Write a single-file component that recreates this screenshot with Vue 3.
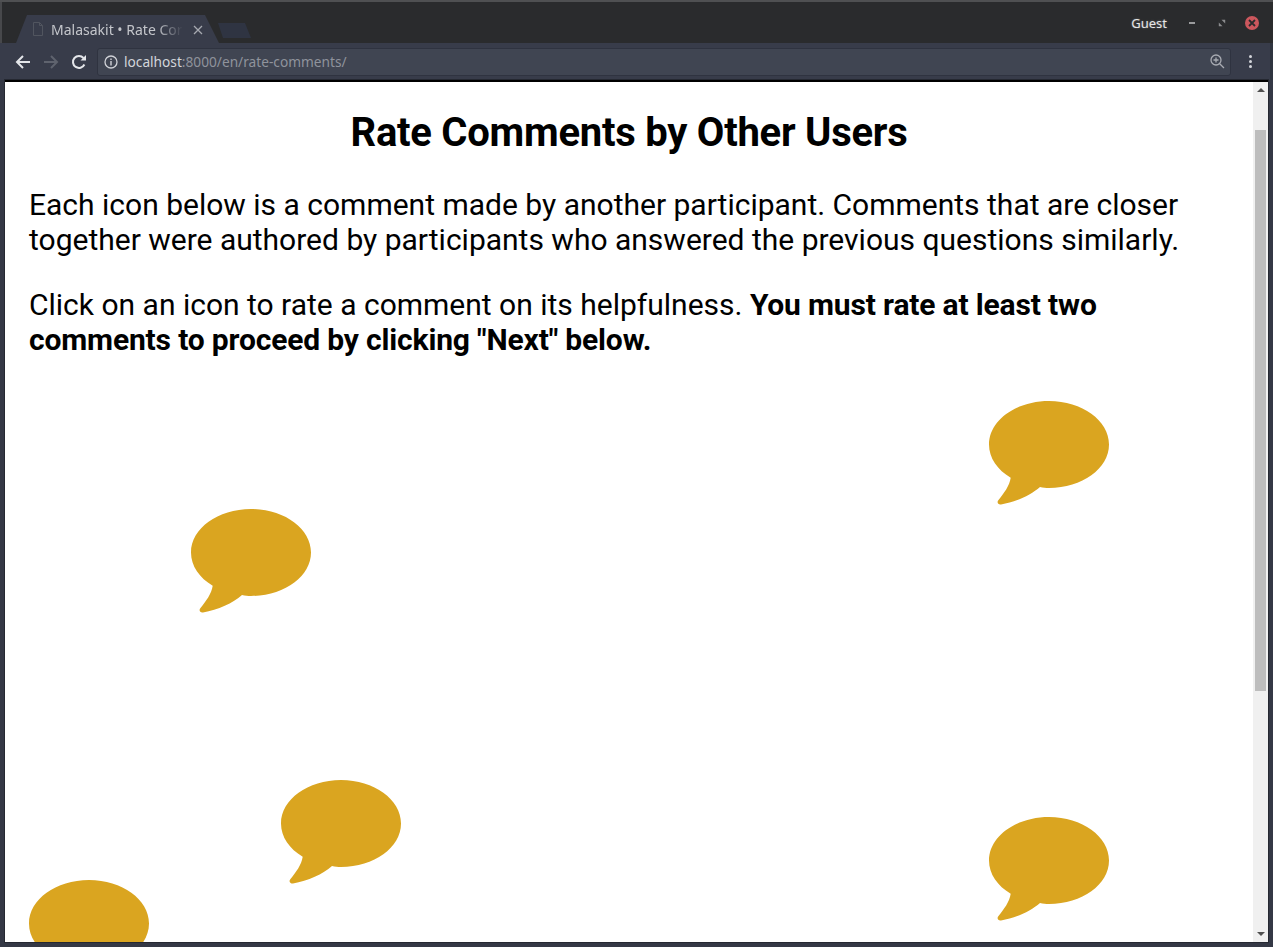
<script setup>
const bubbles = [
  { id: 1, x: 960, y: 44 },
  { id: 2, x: 162, y: 152 },
  { id: 3, x: 252, y: 423 },
  { id: 4, x: 960, y: 460 },
  { id: 5, x: 0, y: 523 }
]
</script>

<template>
  <div class="window">
    <header class="titlebar">
      <div class="tab">
        <svg class="file-icon" width="12" height="14" viewBox="0 0 12 14">
          <path d="M1.5 .5H7.5L10.5 3.5V13.5H1.5ZM7.5 .5V3.5H10.5" fill="none" stroke="#51555f" />
        </svg>
        <span class="tab-title">Malasakit • Rate Cor</span>
        <svg class="tab-close" width="10" height="10" viewBox="0 0 10 10">
          <path d="M1 1L9 9M9 1L1 9" stroke="#a6a9b0" stroke-width="1.3" />
        </svg>
      </div>
      <div class="new-tab"></div>
      <div class="spacer"></div>
      <span class="guest">Guest</span>
      <div class="win-buttons">
        <span class="win-min"></span>
        <svg class="win-max" width="8" height="8" viewBox="0 0 8 8">
          <path d="M3.5 .8H7.2V4.5ZM4.5 7.2H.8V3.5Z" fill="#8b8c8e" />
        </svg>
        <span class="win-close">
          <svg width="8" height="8" viewBox="0 0 8 8">
            <path d="M1 1L7 7M7 1L1 7" stroke="#2a2b2d" stroke-width="1.8" />
          </svg>
        </span>
      </div>
    </header>

    <nav class="toolbar">
      <svg class="nav-icon" width="16" height="16" viewBox="0 0 16 16">
        <path d="M15 8H2M8 2L2 8L8 14" fill="none" stroke="#e4e6ea" stroke-width="2" />
      </svg>
      <svg class="nav-icon" width="16" height="16" viewBox="0 0 16 16">
        <path d="M1 8H14M8 2L14 8L8 14" fill="none" stroke="#5f636e" stroke-width="2" />
      </svg>
      <svg class="nav-icon" width="16" height="16" viewBox="0 0 16 16">
        <path d="M13.4 10.5A6 6 0 1 1 12.5 4" fill="none" stroke="#e4e6ea" stroke-width="2" />
        <path d="M9.5 6.5H15V1Z" fill="#e4e6ea" />
      </svg>
      <div class="urlbar">
        <svg width="14" height="14" viewBox="0 0 14 14">
          <circle cx="7" cy="7" r="6" fill="none" stroke="#d0d2d7" stroke-width="1.3" />
          <path d="M7 6V10.5M7 3.4V5" stroke="#d0d2d7" stroke-width="1.4" />
        </svg>
        <span class="url"><span class="host">localhost</span>:8000/en/rate-comments/</span>
        <svg class="zoom-icon" width="15" height="15" viewBox="0 0 15 15">
          <circle cx="6" cy="6" r="5" fill="none" stroke="#a9acb3" stroke-width="1.3" />
          <path d="M9.7 9.7L14 14M6 3.5V8.5M3.5 6H8.5" stroke="#a9acb3" stroke-width="1.3" />
        </svg>
      </div>
      <div class="menu-dots"><i></i><i></i><i></i></div>
    </nav>

    <div class="viewport">
      <main class="page">
        <h1>Rate Comments by Other Users</h1>
        <p>Each icon below is a comment made by another participant. Comments that are closer together were authored by participants who answered the previous questions similarly.</p>
        <p>Click on an icon to rate a comment on its helpfulness. <strong>You must rate at least two comments to proceed by clicking "Next" below.</strong></p>
        <div class="canvas">
          <svg
            v-for="b in bubbles"
            :key="b.id"
            class="bubble"
            :style="{ left: b.x + 'px', top: b.y + 'px' }"
            width="120"
            height="104"
            viewBox="0 0 120 104"
          >
            <path d="M60 0C93 0 120 19.5 120 43.5C120 67.5 93 87 60 87C57 87 54 86.8 51 86C42 94 27 101 12 103.5C9 104 7.5 101 9.5 99C15 92 20.5 85 21.7 76.7C8.5 69 0 57 0 43.5C0 19.5 27 0 60 0Z" />
          </svg>
        </div>
      </main>
      <aside class="scrollbar">
        <span class="arrow up"></span>
        <div class="track"><div class="thumb"></div></div>
        <span class="arrow down"></span>
      </aside>
    </div>
  </div>
</template>

<style scoped>
.window {
  width: 1273px;
  height: 947px;
  display: flex;
  flex-direction: column;
  overflow: hidden;
  box-sizing: border-box;
  border-top: 2px solid #4f5052;
  background: #343845;
  font-family: Roboto, "Liberation Sans", sans-serif;
}

.titlebar {
  height: 41px;
  flex: none;
  display: flex;
  align-items: flex-end;
  box-sizing: border-box;
  background: #2a2b2d;
  border-left: 2px solid #47484b;
  padding-left: 14px;
  padding-right: 14px;
}

.tab {
  width: 203px;
  height: 28px;
  box-sizing: border-box;
  display: flex;
  align-items: center;
  padding: 0 36px 0 16px;
  background: #383c4a;
  clip-path: polygon(11px 0, 189px 0, 203px 100%, 0 100%);
  position: relative;
}

.file-icon {
  flex: none;
  margin-right: 7px;
}

.tab-title {
  font-family: "Noto Sans", "Open Sans", sans-serif;
  font-size: 14px;
  color: #c4c6cb;
  white-space: nowrap;
  flex: 1;
  -webkit-mask-image: linear-gradient(to right, #000 80%, transparent 100%);
  mask-image: linear-gradient(to right, #000 80%, transparent 100%);
}

.tab-close {
  position: absolute;
  right: 16px;
  top: 10px;
}

.new-tab {
  width: 33px;
  height: 15px;
  margin-left: -1px;
  margin-bottom: 5px;
  background: #2f3442;
  clip-path: polygon(0 0, 27px 0, 33px 100%, 5px 100%);
}

.spacer {
  flex: 1;
}

.guest {
  align-self: flex-start;
  margin-top: 12px;
  font-family: "Noto Sans", "Open Sans", sans-serif;
  font-size: 13px;
  color: #e6e6e6;
  text-shadow: 0 0 2px rgba(255, 255, 255, 0.35);
}

.win-buttons {
  align-self: flex-start;
  margin-top: 14px;
  margin-left: 22px;
  display: flex;
  align-items: center;
  height: 14px;
}

.win-min {
  width: 6px;
  height: 2px;
  background: #9a9b9d;
}

.win-max {
  margin-left: 23px;
}

.win-close {
  margin-left: 19px;
  width: 14px;
  height: 14px;
  border-radius: 50%;
  background: #cc575d;
  display: flex;
  align-items: center;
  justify-content: center;
}

.toolbar {
  height: 37px;
  flex: none;
  display: flex;
  align-items: center;
  box-sizing: border-box;
  padding: 0 11px 0 15px;
  background: #383c4a;
  border-right: 3px solid #2f343f;
}

.nav-icon {
  flex: none;
  margin-right: 12px;
}

.urlbar {
  width: 1134px;
  height: 28px;
  box-sizing: border-box;
  margin-left: -2px;
  display: flex;
  align-items: center;
  gap: 6px;
  padding: 0 5px 0 6px;
  background: #404552;
  border: 1px solid #2f3340;
  border-radius: 3px;
}

.url {
  font-family: "Noto Sans", "Open Sans", sans-serif;
  font-size: 13.7px;
  color: #8f939c;
}

.host {
  color: #d3d5da;
}

.zoom-icon {
  margin-left: auto;
}

.menu-dots {
  margin-left: 18px;
  display: flex;
  flex-direction: column;
  gap: 2px;
}

.menu-dots i {
  width: 3px;
  height: 3px;
  border-radius: 50%;
  background: #d3d5da;
}

.viewport {
  flex: 1;
  min-height: 0;
  display: flex;
  margin: 0 5px 5px 5px;
  border-top: 2px solid #000;
  background: #fff;
  box-shadow: 0 0 0 1px #252831;
  overflow: hidden;
}

.page {
  flex: 1;
  min-width: 0;
  box-sizing: border-box;
  padding: 0 24px;
  color: #000;
}

h1 {
  margin: 26px 0 0;
  font-size: 40px;
  line-height: 50px;
  font-weight: 700;
  text-align: center;
  letter-spacing: -0.25px;
}

p {
  margin: 30px 0 0;
  font-size: 30px;
  line-height: 35px;
}

h1 + p {
  margin-top: 29px;
}

strong {
  letter-spacing: -0.16px;
}

.canvas {
  position: relative;
}

.bubble {
  position: absolute;
  fill: #daa520;
}

.scrollbar {
  width: 15px;
  flex: none;
  background: #f0f0f0;
  display: flex;
  flex-direction: column;
  align-items: center;
}

.arrow {
  flex: none;
  margin: 6px 0;
  width: 0;
  height: 0;
  border-left: 4px solid transparent;
  border-right: 4px solid transparent;
}

.arrow.up {
  border-bottom: 4px solid #505050;
}

.arrow.down {
  border-top: 4px solid #505050;
}

.track {
  flex: 1;
  width: 100%;
  padding-top: 32px;
  box-sizing: border-box;
}

.thumb {
  width: 11px;
  margin: 0 auto;
  height: 561px;
  background: #bdbdbd;
}
</style>

<style>
html,
body {
  margin: 0;
  overflow: hidden;
}
</style>
